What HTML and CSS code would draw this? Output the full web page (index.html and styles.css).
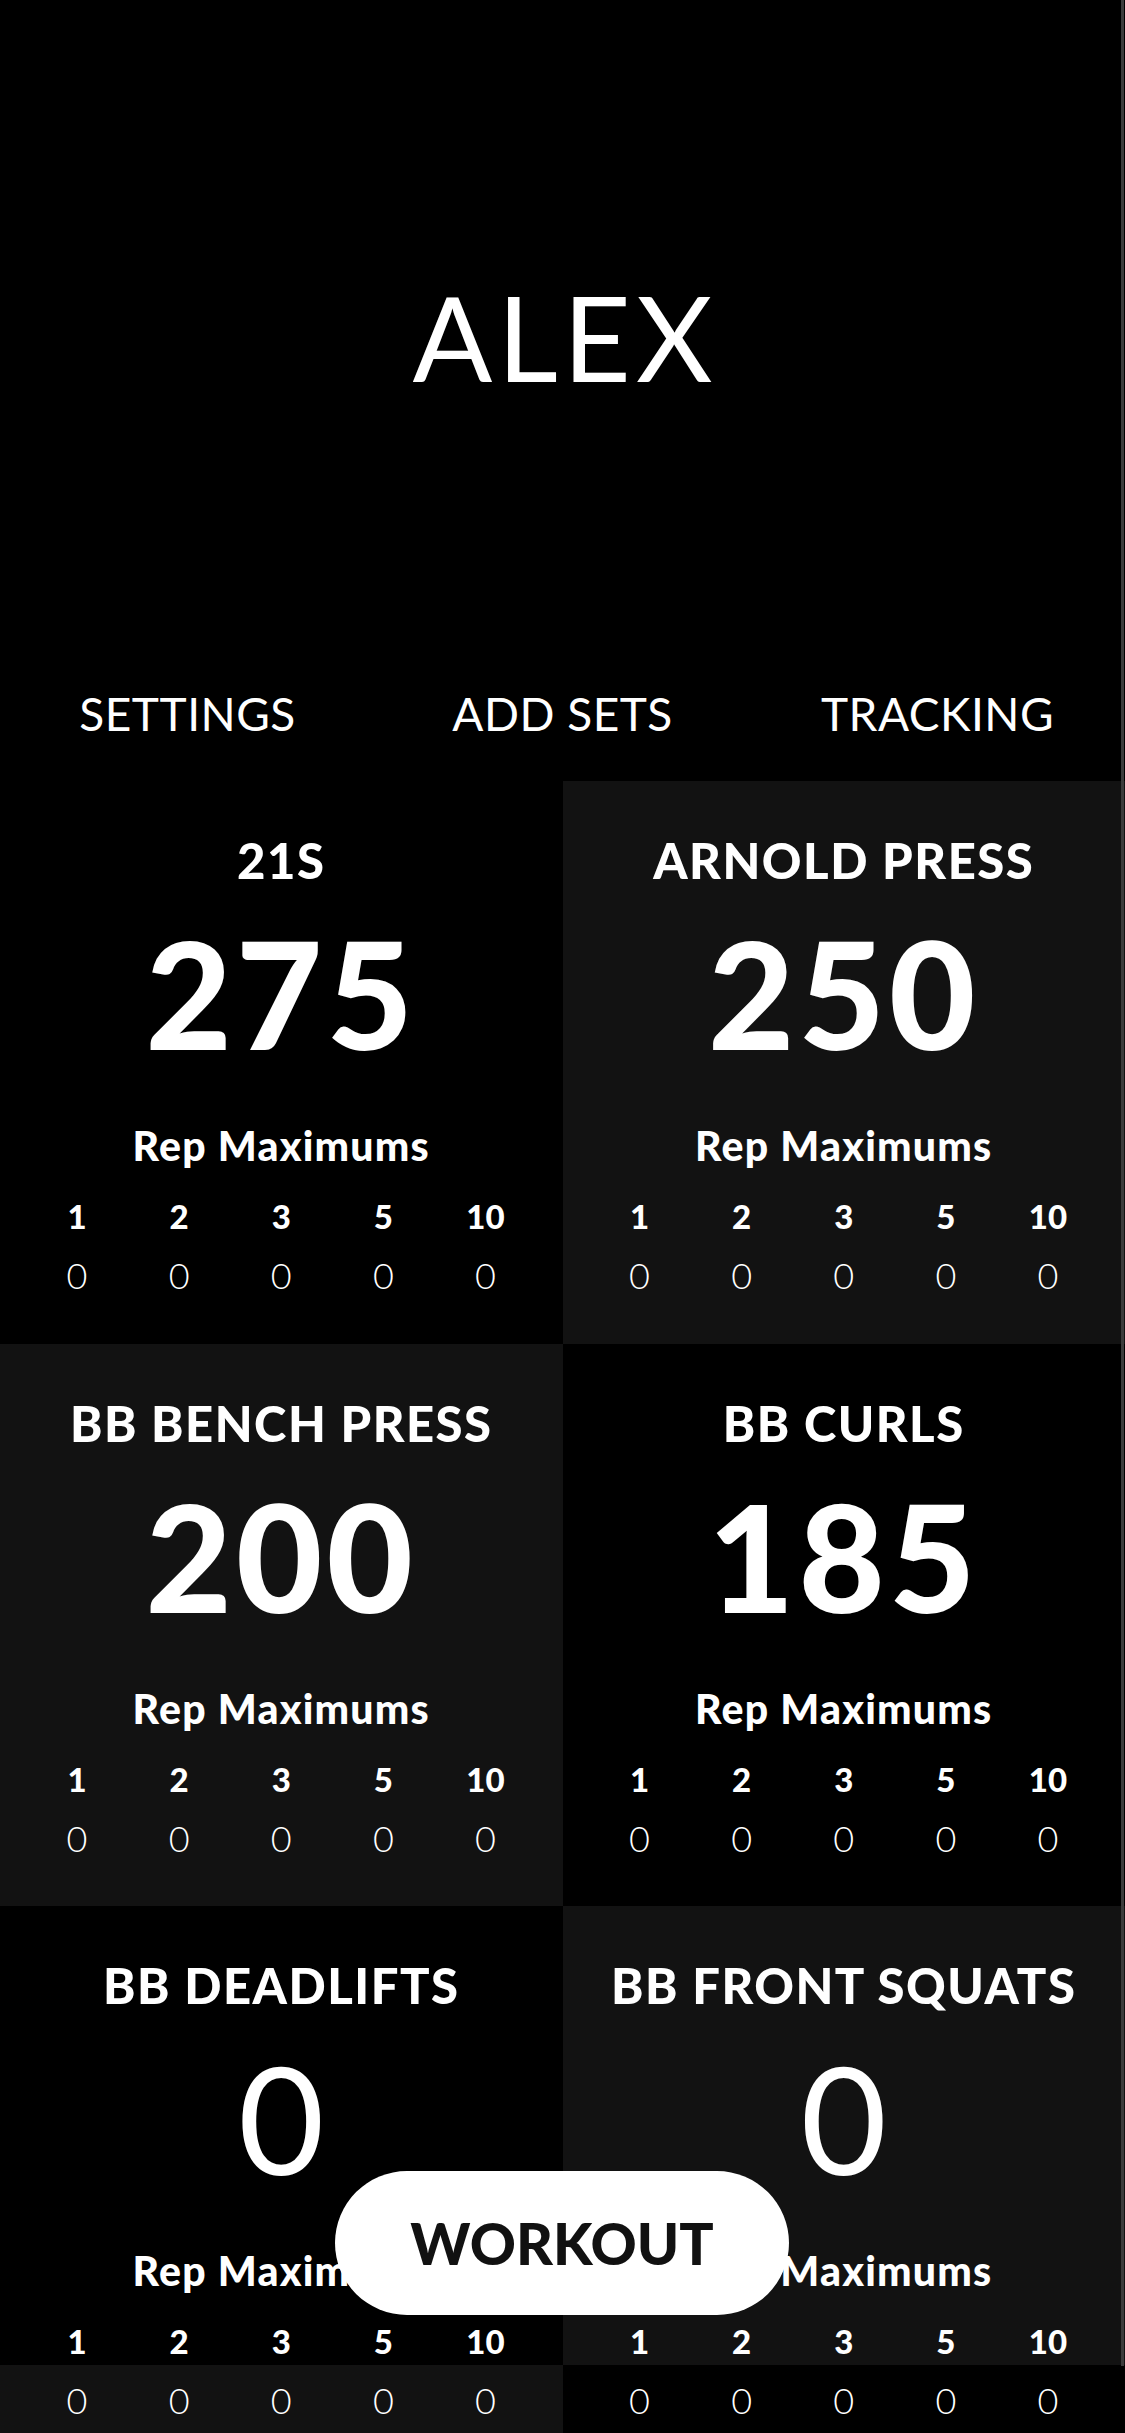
FILE: index.html
```html
<!DOCTYPE html>
<html lang="en">
<head>
<meta charset="utf-8">
<title>ALEX</title>
<link rel="stylesheet" href="styles.css">
</head>
<body>
<div class="app">
  <header class="header">
    <h1 class="name">ALEX</h1>
  </header>
  <nav class="nav">
    <span class="nav-item">SETTINGS</span>
    <span class="nav-item">ADD SETS</span>
    <span class="nav-item">TRACKING</span>
  </nav>
  <main class="grid">
    <section class="card dark">
      <h2 class="card-title">21S</h2>
      <div class="big">275</div>
      <div class="rm-label">Rep Maximums</div>
      <div class="reps"><span>1</span><span>2</span><span>3</span><span>5</span><span>10</span></div>
      <div class="vals"><span>0</span><span>0</span><span>0</span><span>0</span><span>0</span></div>
    </section>
    <section class="card grey">
      <h2 class="card-title">ARNOLD PRESS</h2>
      <div class="big">250</div>
      <div class="rm-label">Rep Maximums</div>
      <div class="reps"><span>1</span><span>2</span><span>3</span><span>5</span><span>10</span></div>
      <div class="vals"><span>0</span><span>0</span><span>0</span><span>0</span><span>0</span></div>
    </section>
    <section class="card grey">
      <h2 class="card-title">BB BENCH PRESS</h2>
      <div class="big">200</div>
      <div class="rm-label">Rep Maximums</div>
      <div class="reps"><span>1</span><span>2</span><span>3</span><span>5</span><span>10</span></div>
      <div class="vals"><span>0</span><span>0</span><span>0</span><span>0</span><span>0</span></div>
    </section>
    <section class="card dark">
      <h2 class="card-title">BB CURLS</h2>
      <div class="big">185</div>
      <div class="rm-label">Rep Maximums</div>
      <div class="reps"><span>1</span><span>2</span><span>3</span><span>5</span><span>10</span></div>
      <div class="vals"><span>0</span><span>0</span><span>0</span><span>0</span><span>0</span></div>
    </section>
    <section class="card dark-split">
      <h2 class="card-title">BB DEADLIFTS</h2>
      <div class="big zero">0</div>
      <div class="rm-label">Rep Maximums</div>
      <div class="reps"><span>1</span><span>2</span><span>3</span><span>5</span><span>10</span></div>
      <div class="vals"><span>0</span><span>0</span><span>0</span><span>0</span><span>0</span></div>
    </section>
    <section class="card grey-split">
      <h2 class="card-title">BB FRONT SQUATS</h2>
      <div class="big zero">0</div>
      <div class="rm-label">Rep Maximums</div>
      <div class="reps"><span>1</span><span>2</span><span>3</span><span>5</span><span>10</span></div>
      <div class="vals"><span>0</span><span>0</span><span>0</span><span>0</span><span>0</span></div>
    </section>
  </main>
  <button class="workout">WORKOUT</button>
  <div class="scrollbar"></div>
</div>
</body>
</html>
```
FILE: styles.css
```css
html, body {
  margin: 0;
  padding: 0;
  background: #000;
}
body {
  font-family: Lato, "Noto Sans", sans-serif;
  color: #fff;
  width: 1125px;
  height: 2433px;
  overflow: hidden;
}
.app {
  width: 1125px;
}
.header {
  padding-top: 278px;
  height: 691px;
  box-sizing: border-box;
}
.name {
  margin: 0;
  text-align: center;
  font-size: 118px;
  line-height: 1;
  font-weight: 400;
  letter-spacing: 5px;
  padding-left: 5px;
}
.nav {
  display: grid;
  grid-template-columns: 1fr 1fr 1fr;
  height: 90px;
}
.nav-item {
  text-align: center;
  font-size: 46px;
  line-height: 1;
  font-weight: 400;
  letter-spacing: 0.5px;
}
.grid {
  display: grid;
  grid-template-columns: 1fr 1fr;
}
.card {
  aspect-ratio: 1 / 1;
  display: flex;
  flex-direction: column;
  align-items: stretch;
  padding-top: 55px;
  box-sizing: border-box;
  text-align: center;
}
.dark { background: #000; }
.grey { background: #121212; }
.dark-split { background: linear-gradient(#000 0, #000 459px, #121212 459px); }
.grey-split { background: linear-gradient(#121212 0, #121212 459px, #000 459px); }
.card-title {
  margin: 0;
  font-size: 49px;
  line-height: 1;
  font-weight: 900;
  letter-spacing: 1.5px;
}
.big {
  margin-top: 33px;
  font-size: 149px;
  line-height: 1;
  font-weight: 900;
  letter-spacing: 4px;
}
.big.zero {
  font-weight: 400;
  letter-spacing: 0;
}
.rm-label {
  margin-top: 58px;
  font-size: 41px;
  line-height: 1;
  font-weight: 900;
  letter-spacing: 1.2px;
}
.reps, .vals {
  display: grid;
  grid-template-columns: repeat(5, 1fr);
  padding: 0 26px;
}
.reps {
  margin-top: 34px;
  font-size: 33px;
  line-height: 1;
  font-weight: 900;
}
.vals {
  margin-top: 24px;
  font-size: 36px;
  line-height: 1;
  font-weight: 300;
}
.workout {
  position: fixed;
  left: 335px;
  top: 2171px;
  width: 454px;
  height: 144px;
  border: 0;
  border-radius: 72px;
  background: #fff;
  color: #111;
  font-family: Lato, "Noto Sans", sans-serif;
  font-size: 57px;
  font-weight: 900;
  padding: 0;
}
.scrollbar {
  position: fixed;
  top: 0;
  right: 1px;
  width: 3px;
  height: 2366px;
  background: #3c3c3c;
}
```
